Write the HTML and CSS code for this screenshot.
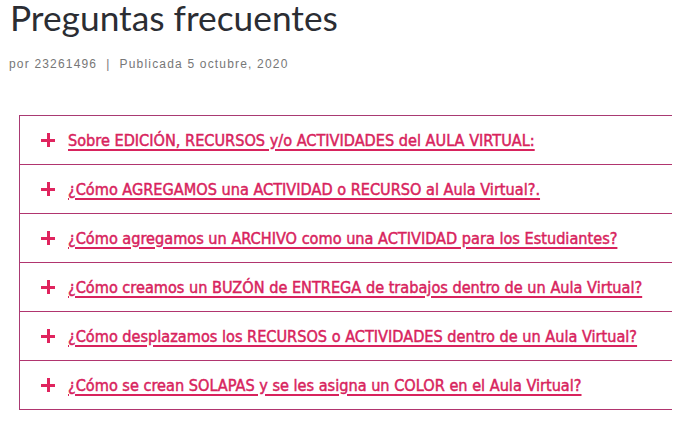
FILE: index.html
```html
<!DOCTYPE html>
<html lang="es">
<head>
<meta charset="utf-8">
<title>Preguntas frecuentes</title>
<link rel="stylesheet" href="styles.css">
</head>
<body>
<div class="page">
  <h1 class="title">Preguntas frecuentes</h1>
  <p class="meta">por 23261496 &nbsp;|&nbsp; Publicada 5 octubre, 2020</p>
  <div class="faq">
    <div class="row"><span class="plus"></span><a href="#" class="q">Sobre EDICIÓN, RECURSOS y/o ACTIVIDADES del AULA VIRTUAL:</a></div>
    <div class="row"><span class="plus"></span><a href="#" class="q">¿Cómo AGREGAMOS una ACTIVIDAD o RECURSO al Aula Virtual?.</a></div>
    <div class="row"><span class="plus"></span><a href="#" class="q">¿Cómo agregamos un ARCHIVO como una ACTIVIDAD para los Estudiantes?</a></div>
    <div class="row"><span class="plus"></span><a href="#" class="q">¿Cómo creamos un BUZÓN de ENTREGA de trabajos dentro de un Aula Virtual?</a></div>
    <div class="row"><span class="plus"></span><a href="#" class="q">¿Cómo desplazamos los RECURSOS o ACTIVIDADES dentro de un Aula Virtual?</a></div>
    <div class="row"><span class="plus"></span><a href="#" class="q">¿Cómo se crean SOLAPAS y se les asigna un COLOR en el Aula Virtual?</a></div>
  </div>
</div>
</body>
</html>
```
FILE: styles.css
```css
html, body { margin: 0; padding: 0; background: #fff; }
.page { padding: 0 23px 0 19px; overflow: hidden; }
.title {
  margin: 0 0 0 -9px;
  font-family: Lato, sans-serif;
  font-weight: 400;
  font-size: 35.3px;
  line-height: 36px;
  color: #2b2d33;
}
.meta {
  margin: 21px 0 0 -10px;
  font-family: "Liberation Sans", Arial, sans-serif;
  font-size: 12px;
  line-height: 14px;
  letter-spacing: 1.18px;
  color: #777;
}
.faq {
  margin-top: 44px;
  border-left: 1px solid #a93a73;
  border-top: 1px solid #a93a73;
}
.row {
  height: 48px;
  border-bottom: 1px solid #b1356f;
  display: flex;
  align-items: center;
  padding-left: 21px;
}
.plus {
  position: relative;
  width: 14px;
  height: 14px;
  flex: none;
  margin-right: 13px;
}
.plus::before, .plus::after {
  content: "";
  position: absolute;
  background: #e0245e;
}
.plus::before { left: 0; top: 5.5px; width: 14px; height: 3px; }
.plus::after { left: 5.5px; top: 0; width: 3px; height: 14px; }
.q {
  font-family: "DejaVu Sans Condensed", "DejaVu Sans", sans-serif;
  font-size: 16.15px;
  font-weight: 400;
  -webkit-text-stroke: 0.45px #d8235d;
  color: #d8235d;
  text-decoration: underline;
  text-decoration-thickness: 1.5px;
  text-underline-offset: 3px;
  white-space: nowrap;
}
```
